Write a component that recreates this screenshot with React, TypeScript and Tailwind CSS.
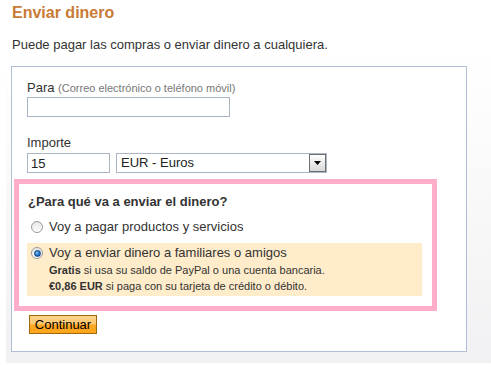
import {useState} from 'react'

function Radio({checked}: {checked: boolean}) {
  return (
    <span className="relative inline-flex h-[12px] w-[12px] shrink-0 items-center justify-center rounded-full border border-[#9a9a9a] bg-gradient-to-b from-[#e6e6e6] to-white">
      {checked && <span className="h-[7px] w-[7px] rounded-full border border-[#0b3d70] bg-[radial-gradient(circle_at_40%_35%,#7fc4ff,#1a6fc4_60%,#0b4a8c)]" />}
    </span>
  )
}

export default function App() {
  const [choice, setChoice] = useState<'pagar' | 'enviar'>('enviar')
  const [importe, setImporte] = useState('15')

  return (
    <div className="min-h-[368px] bg-white text-[13px] leading-4 text-[#333] [font-family:'Liberation_Sans',Arial,sans-serif]">
      <div className="ml-[6px] h-[363px] bg-gradient-to-b from-white from-15% to-[#f1f1f3]">
        <h1 className="pl-[6px] pt-[3px] text-[16px] font-bold leading-[19px] text-[#c97a36]">Enviar dinero</h1>
        <p className="mt-[15px] pl-[6px]">Puede pagar las compras o enviar dinero a cualquiera.</p>

        <div className="mt-[13px] ml-[5px] h-[286px] w-[456px] border border-[#aebfd6] bg-white pt-[13px]">
          <div className="pl-[15px]">
            <div>
              Para <span className="text-[11px] text-[#777]">(Correo electrónico o teléfono móvil)</span>
            </div>
            <input className="mt-px block h-[20px] w-[203px] border border-[#aab6c6] px-1 outline-none" />

            <div className="mt-[18px]">Importe</div>
            <div className="mt-[2px] flex gap-[6px]">
              <input
                value={importe}
                onChange={e => setImporte(e.target.value)}
                className="h-[20px] w-[83px] border border-[#aab6c6] px-[3px] text-[13px] text-[#222] outline-none"
              />
              <div className="flex h-[20px] w-[211px] items-center justify-between border border-[#aab6c6] pl-[4px] text-[#222]">
                <span>EUR - Euros</span>
                <span className="flex h-[18px] w-[17px] items-center justify-center border border-[#6f6f6f] bg-gradient-to-b from-white to-[#d8d8d8]">
                  <svg width="7" height="4" viewBox="0 0 7 4">
                    <path d="M0 0h7L3.5 4z" fill="#000" />
                  </svg>
                </span>
              </div>
            </div>
          </div>

          <div className="mt-[6px] ml-[2px] w-[423px] border-[5px] border-[#ffadcb] pb-[10px] pt-[10px]">
            <div className="pl-[9px] font-bold">¿Para qué va a enviar el dinero?</div>
            <label className="mt-[9px] flex cursor-pointer items-center gap-[6px] pl-[12px]" onClick={() => setChoice('pagar')}>
              <Radio checked={choice === 'pagar'} />
              <span>Voy a pagar productos y servicios</span>
            </label>
            <div
              className={`ml-[8px] mr-[10px] mt-[8px] pb-[2px] pt-[2px] ${choice === 'enviar' ? 'bg-[#feecca]' : ''}`}
              onClick={() => setChoice('enviar')}
            >
              <label className="flex cursor-pointer items-center gap-[6px] pl-[4px]">
                <Radio checked={choice === 'enviar'} />
                <span>Voy a enviar dinero a familiares o amigos</span>
              </label>
              <div className="mt-px pl-[22px] text-[11px]">
                <div>
                  <b>Gratis</b> si usa su saldo de PayPal o una cuenta bancaria.
                </div>
                <div>
                  <b>€0,86 EUR</b> si paga con su tarjeta de crédito o débito.
                </div>
              </div>
            </div>
          </div>

          <button className="ml-[17px] mt-[4px] flex h-[19px] w-[68px] items-center justify-center border border-[#a2680e] bg-[linear-gradient(#ffd386_0%,#ffc870_48%,#ffa61f_52%,#ffa61f_100%)] text-[13px] text-black">
            Continuar
          </button>
        </div>
      </div>
    </div>
  )
}
